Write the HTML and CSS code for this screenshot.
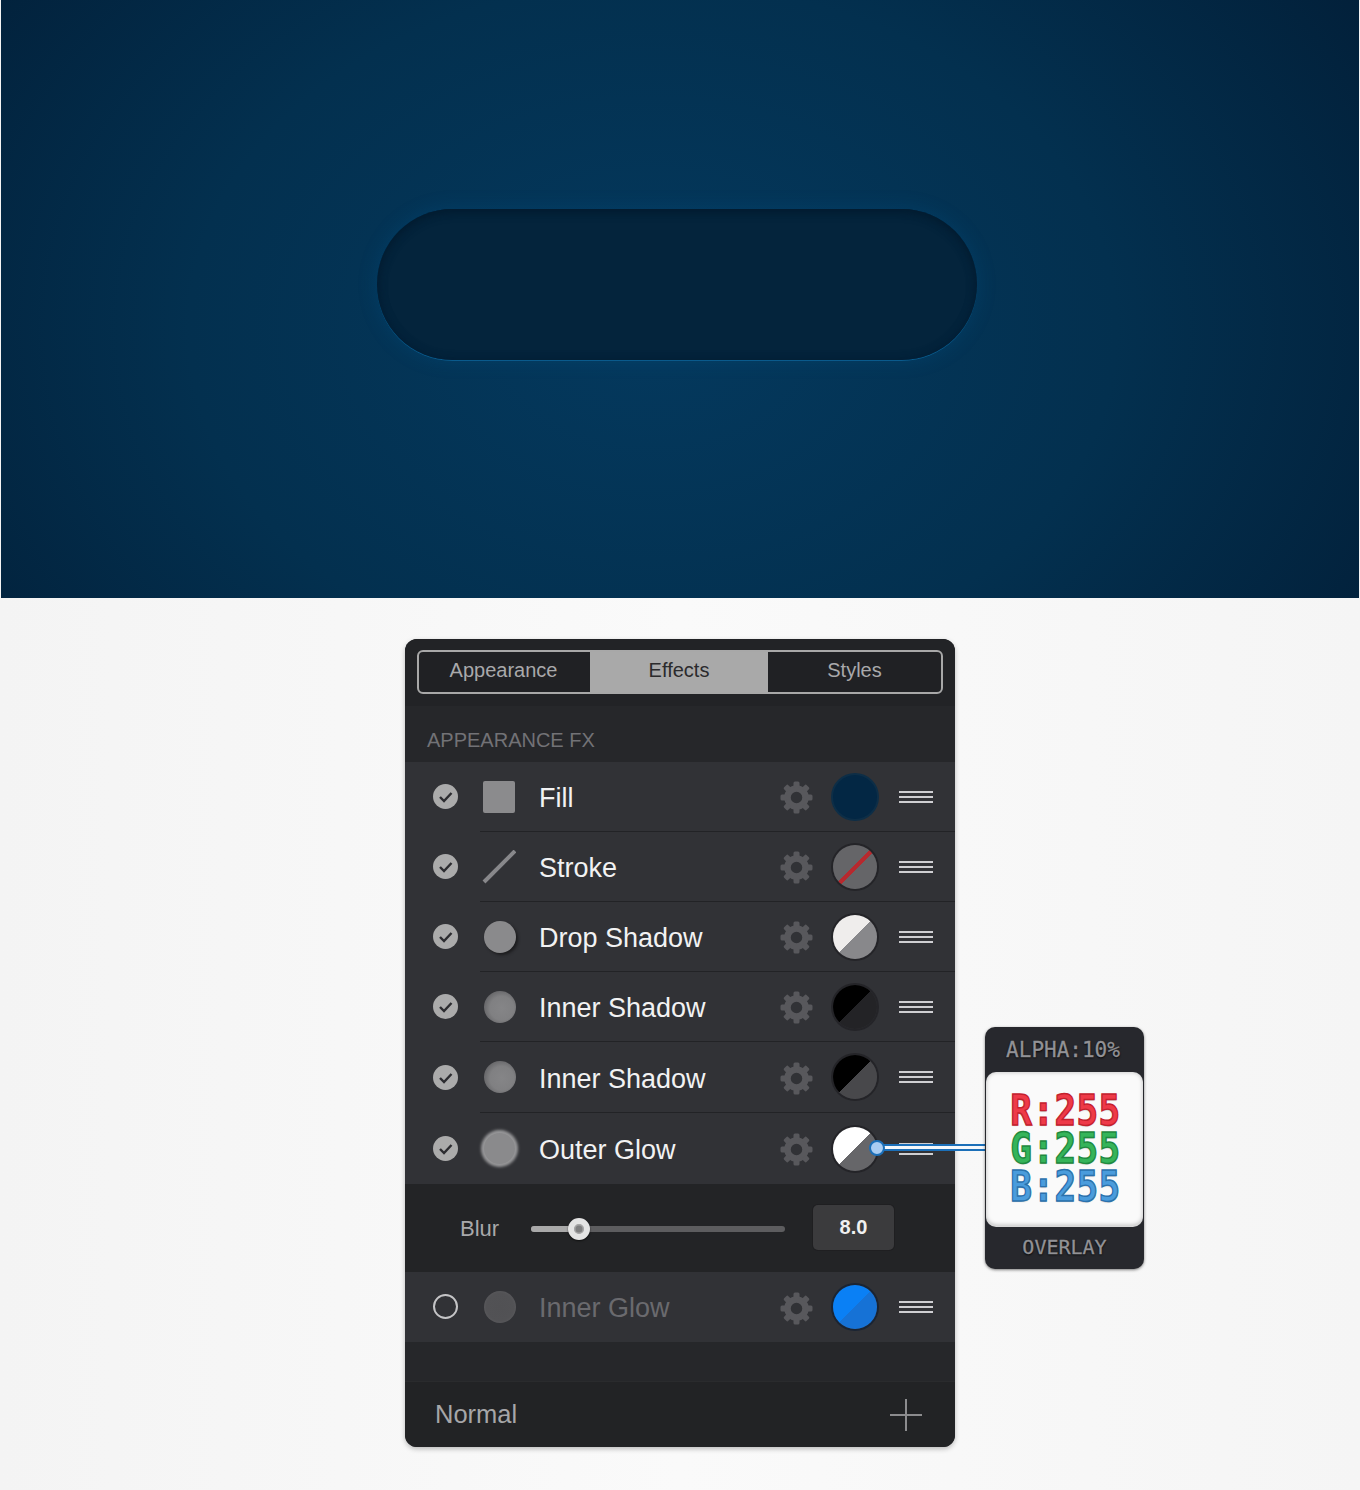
FILE: index.html
```html
<!DOCTYPE html>
<html lang="en">
<head>
  <meta charset="UTF-8" />
  <title>Appearance FX</title>
  <link rel="stylesheet" href="styles.css">
</head>
<body>
  <svg class="defs" width="0" height="0">
    <defs>
      <g id="gear">
        <circle cx="16.5" cy="16.5" r="9" fill="none" stroke="currentColor" stroke-width="6.5" />
        <rect x="13.5" y="0.5" width="6" height="6" rx="1.5" fill="currentColor" />
        <rect x="13.5" y="0.5" width="6" height="6" rx="1.5" fill="currentColor" transform="rotate(45 16.5 16.5)" />
        <rect x="13.5" y="0.5" width="6" height="6" rx="1.5" fill="currentColor" transform="rotate(90 16.5 16.5)" />
        <rect x="13.5" y="0.5" width="6" height="6" rx="1.5" fill="currentColor" transform="rotate(135 16.5 16.5)" />
        <rect x="13.5" y="0.5" width="6" height="6" rx="1.5" fill="currentColor" transform="rotate(180 16.5 16.5)" />
        <rect x="13.5" y="0.5" width="6" height="6" rx="1.5" fill="currentColor" transform="rotate(225 16.5 16.5)" />
        <rect x="13.5" y="0.5" width="6" height="6" rx="1.5" fill="currentColor" transform="rotate(270 16.5 16.5)" />
        <rect x="13.5" y="0.5" width="6" height="6" rx="1.5" fill="currentColor" transform="rotate(315 16.5 16.5)" />
      </g>
      <path id="tick" d="M7 13l4 4 7.5-8" fill="none" stroke="#2c2c30" stroke-width="2.4" />
    </defs>
  </svg>

  <div class="hero">
    <div class="pill"></div>
  </div>

  <div class="stage">
    <div class="panel">
      <div class="tabs-bar">
        <div class="tabs">
          <div class="tab">Appearance</div>
          <div class="tab active">Effects</div>
          <div class="tab">Styles</div>
        </div>
      </div>

      <div class="section-head">APPEARANCE FX</div>

      <div class="row">
        <div class="check"><svg width="25" height="25" viewBox="0 0 25 25"><use href="#tick" /></svg></div>
        <div class="row-body">
          <div class="icon-slot"><span class="ic-square"></span></div>
          <div class="name">Fill</div>
          <svg class="gear" width="33" height="33" viewBox="0 0 33 33"><use href="#gear" /></svg>
          <div class="swatch sw-fill"></div>
          <div class="handle"><i></i><i></i><i></i></div>
        </div>
      </div>

      <div class="row">
        <div class="check"><svg width="25" height="25" viewBox="0 0 25 25"><use href="#tick" /></svg></div>
        <div class="row-body">
          <div class="icon-slot">
            <svg width="34" height="34" viewBox="0 0 34 34"><path d="M2 32L33 1" stroke="#88888b" stroke-width="4" /></svg>
          </div>
          <div class="name">Stroke</div>
          <svg class="gear" width="33" height="33" viewBox="0 0 33 33"><use href="#gear" /></svg>
          <div class="swatch sw-stroke"></div>
          <div class="handle"><i></i><i></i><i></i></div>
        </div>
      </div>

      <div class="row">
        <div class="check"><svg width="25" height="25" viewBox="0 0 25 25"><use href="#tick" /></svg></div>
        <div class="row-body">
          <div class="icon-slot"><span class="ic-dot ic-drop"></span></div>
          <div class="name">Drop Shadow</div>
          <svg class="gear" width="33" height="33" viewBox="0 0 33 33"><use href="#gear" /></svg>
          <div class="swatch sw-drop"></div>
          <div class="handle"><i></i><i></i><i></i></div>
        </div>
      </div>

      <div class="row">
        <div class="check"><svg width="25" height="25" viewBox="0 0 25 25"><use href="#tick" /></svg></div>
        <div class="row-body">
          <div class="icon-slot"><span class="ic-dot ic-inner"></span></div>
          <div class="name">Inner Shadow</div>
          <svg class="gear" width="33" height="33" viewBox="0 0 33 33"><use href="#gear" /></svg>
          <div class="swatch sw-inner1"></div>
          <div class="handle"><i></i><i></i><i></i></div>
        </div>
      </div>

      <div class="row tall">
        <div class="check"><svg width="25" height="25" viewBox="0 0 25 25"><use href="#tick" /></svg></div>
        <div class="row-body">
          <div class="icon-slot"><span class="ic-dot ic-inner"></span></div>
          <div class="name">Inner Shadow</div>
          <svg class="gear" width="33" height="33" viewBox="0 0 33 33"><use href="#gear" /></svg>
          <div class="swatch sw-inner2"></div>
          <div class="handle"><i></i><i></i><i></i></div>
        </div>
      </div>

      <div class="row tall">
        <div class="check"><svg width="25" height="25" viewBox="0 0 25 25"><use href="#tick" /></svg></div>
        <div class="row-body no-line">
          <div class="icon-slot"><span class="ic-dot ic-outer"></span></div>
          <div class="name">Outer Glow</div>
          <svg class="gear" width="33" height="33" viewBox="0 0 33 33"><use href="#gear" /></svg>
          <div class="swatch sw-outer"></div>
          <div class="handle"><i></i><i></i><i></i></div>
        </div>
      </div>

      <div class="blur-row">
        <div class="blur-label">Blur</div>
        <div class="slider">
          <div class="slider-fill"></div>
          <div class="thumb"></div>
        </div>
        <div class="value">8.0</div>
      </div>

      <div class="row row-off">
        <div class="check off"></div>
        <div class="row-body no-line">
          <div class="icon-slot"><span class="ic-dot ic-dim"></span></div>
          <div class="name">Inner Glow</div>
          <svg class="gear" width="33" height="33" viewBox="0 0 33 33"><use href="#gear" /></svg>
          <div class="swatch sw-glow"></div>
          <div class="handle"><i></i><i></i><i></i></div>
        </div>
      </div>

      <div class="spacer"></div>

      <div class="footer">
        <div class="mode">Normal</div>
        <div class="plus"></div>
      </div>
    </div>

    <div class="connector"><span class="connector-dot"></span></div>

    <div class="callout">
      <div class="callout-top">ALPHA:10%</div>
      <div class="callout-card">
        <div class="rgb r">R:255</div>
        <div class="rgb g">G:255</div>
        <div class="rgb b">B:255</div>
      </div>
      <div class="callout-bottom">OVERLAY</div>
    </div>
  </div>
</body>
</html>
```

FILE: styles.css
```css
html, body {
  margin: 0;
  padding: 0;
}

body {
  height: 1490px;
  overflow: hidden;
  background: linear-gradient(90deg, #f4f4f4 0, #fafafa 50%, #f5f5f5 100%);
  font-family: "Liberation Sans", Arial, sans-serif;
}

.defs {
  position: absolute;
}

.hero {
  height: 598px;
  margin: 0 1px;
  display: flex;
  justify-content: center;
  padding-top: 209px;
  box-sizing: border-box;
  background: radial-gradient(ellipse 62% 105% at 48% 55%, #04395e 0, #03304f 55%, #02203a 100%);
}

.pill {
  width: 600px;
  height: 151px;
  margin-left: -6px;
  border-radius: 76px;
  background: #04243c;
  box-shadow: inset 0 3px 10px #031b2e, inset 0 0 8px #03203a, 0 1px 0 #0a5a8c, 0 0 20px rgba(0, 110, 180, 0.18);
}

.stage {
  position: relative;
  width: 550px;
  margin: 41px auto 0;
}

.panel {
  width: 550px;
  border-radius: 12px;
  overflow: hidden;
  background: #26272a;
  box-shadow: 0 2px 5px rgba(0, 0, 0, 0.25);
}

.tabs-bar {
  height: 67px;
  padding: 11px 12px 0;
  box-sizing: border-box;
  background: #222326;
}

.tabs {
  display: flex;
  height: 44px;
  box-sizing: border-box;
  border: 2px solid #a8a8a8;
  border-radius: 6px;
  overflow: hidden;
  background: #202124;
}

.tab {
  flex: 1;
  display: flex;
  align-items: center;
  justify-content: center;
  padding-bottom: 3px;
  box-sizing: border-box;
  font-size: 20px;
  color: #a9a9ab;
}

.tab:first-child {
  flex: 0 0 171px;
  padding-right: 2px;
}

.tab.active {
  flex: 0 0 178px;
  background: #a9a9a9;
  color: #2b2b2d;
}

.section-head {
  height: 56px;
  padding: 23px 0 0 22px;
  box-sizing: border-box;
  font-size: 20px;
  color: #727276;
}

.row {
  display: flex;
  align-items: center;
  height: 70px;
  background: #313236;
}

.row.tall {
  height: 71px;
}

.check {
  flex: none;
  width: 25px;
  height: 25px;
  margin: -1px 22px 0 28px;
  border-radius: 50%;
  background: #ababab;
}

.check svg {
  display: block;
}

.check.off {
  width: 21px;
  height: 21px;
  background: none;
  border: 2px solid #c4c4c6;
}

.row-body {
  flex: 1;
  align-self: stretch;
  display: flex;
  align-items: center;
  box-sizing: border-box;
  border-bottom: 1px solid #222326;
  padding-right: 22px;
}

.row-body.no-line {
  border-bottom: none;
}

.icon-slot {
  flex: none;
  width: 36px;
  height: 34px;
  margin-right: 23px;
  padding-left: 3px;
  box-sizing: border-box;
  display: flex;
  align-items: center;
}

.icon-slot svg {
  margin-left: -1px;
}

.ic-square {
  width: 32px;
  height: 32px;
  border-radius: 2px;
  background: #8b8b8d;
}

.ic-dot {
  width: 32px;
  height: 32px;
  margin-left: 1px;
  border-radius: 50%;
  background: #8a8a8c;
}

.ic-drop {
  box-shadow: 2px 2px 3px #1c1c1e;
}

.ic-inner {
  background: radial-gradient(circle at 56% 54%, #858587 0, #808082 48%, #626265 78%, #3f3f42 100%);
}

.ic-outer {
  width: 31px;
  height: 31px;
  box-shadow: 0 0 3px 3px #99999b;
}

.ic-dim {
  background: radial-gradient(circle, #515154 0, #525255 60%, #636366 100%);
}

.name {
  flex: 1;
  margin-top: 4px;
  font-size: 27px;
  color: #f2f2f3;
}

.row-off .name {
  margin-top: 2px;
  color: #6a6a6e;
}

.gear {
  flex: none;
  color: #58585c;
  margin: 2px 20px 0 0;
}

.swatch {
  flex: none;
  width: 44px;
  height: 44px;
  margin-right: 22px;
  border-radius: 50%;
  box-shadow: 0 0 0 2px #242428;
}

.sw-fill { background: #032744; box-shadow: 0 0 0 2px #0d2e47; }
.sw-stroke { background: linear-gradient(135deg, #656568 47.5%, #b62a2f 47.5%, #b62a2f 53.5%, #656568 53.5%); }
.sw-drop { background: linear-gradient(135deg, #efedec 50%, #88888b 50%); }
.sw-inner1 { background: linear-gradient(135deg, #000 50%, #232326 50%); }
.sw-inner2 { background: linear-gradient(135deg, #000 50%, #48484b 50%); }
.sw-outer { background: linear-gradient(135deg, #fff 50%, #666669 50%); }
.sw-glow { background: linear-gradient(135deg, #0a80f5 50%, #1672d6 50%); box-shadow: 0 0 0 2px #1a2433; }

.handle {
  flex: none;
  width: 34px;
  display: flex;
  flex-direction: column;
  gap: 3px;
}

.handle i {
  height: 2px;
  background: #cfcfd2;
}

.blur-row {
  display: flex;
  align-items: center;
  height: 88px;
  box-sizing: border-box;
  padding-left: 55px;
  background: #232426;
}

.blur-label {
  width: 71px;
  margin-top: 2px;
  font-size: 22px;
  color: #a9a9ab;
}

.slider {
  position: relative;
  width: 254px;
  height: 6px;
  margin-top: 2px;
  border-radius: 3px;
  background: #5d5d5f;
}

.slider-fill {
  width: 48px;
  height: 6px;
  border-radius: 3px;
  background: #a9a9a9;
}

.thumb {
  position: absolute;
  left: 37px;
  top: -8px;
  width: 10px;
  height: 10px;
  border: 6px solid #e4e4e4;
  border-radius: 50%;
  background: #7f7f80;
  box-shadow: 0 1px 2px rgba(0, 0, 0, 0.6), inset 0 0 0 1.5px #a5a5a5;
}

.value {
  width: 81px;
  height: 45px;
  margin: -2px 0 0 28px;
  border-radius: 5px;
  background: #3b3b3d;
  box-shadow: 0 0 0 1px #1f1f21;
  display: flex;
  align-items: center;
  justify-content: center;
  font-size: 20px;
  font-weight: bold;
  color: #f0f0f0;
}

.spacer {
  height: 39px;
  background: #26272a;
}

.footer {
  display: flex;
  align-items: center;
  justify-content: space-between;
  height: 66px;
  padding: 0 33px 0 30px;
  box-sizing: border-box;
  background: #222325;
  border-top: 1px solid #2a2b2d;
}

.mode {
  font-size: 25.5px;
  color: #a6a6a8;
}

.plus {
  position: relative;
  width: 32px;
  height: 32px;
}

.plus::before, .plus::after {
  content: "";
  position: absolute;
  background: #8c8c8e;
}

.plus::before {
  left: 0;
  right: 0;
  top: 15px;
  height: 2px;
}

.plus::after {
  top: 0;
  bottom: 0;
  left: 15px;
  width: 2px;
}

.connector {
  position: absolute;
  left: 472px;
  top: 505px;
  width: 108px;
  height: 3px;
  border-top: 2px solid #1b6fb8;
  border-bottom: 2px solid #1b6fb8;
  background: #f4f8fc;
}

.connector-dot {
  position: absolute;
  left: -8px;
  top: -6.5px;
  width: 12px;
  height: 12px;
  border: 2px solid #1b6fb8;
  border-radius: 50%;
  background: #a9cdf2;
}

.callout {
  position: absolute;
  left: 580px;
  top: 388px;
  width: 159px;
  height: 242px;
  border-radius: 10px;
  overflow: hidden;
  display: flex;
  flex-direction: column;
  background: #27282d;
  box-shadow: 0 1px 3px rgba(0, 0, 0, 0.5);
}

.callout-top, .callout-bottom {
  display: flex;
  align-items: center;
  justify-content: center;
  font-family: "DejaVu Sans Mono", monospace;
  color: #929296;
  -webkit-text-stroke: 0.3px #929296;
  text-shadow: 0 1px 2px #000;
}

.callout-top {
  height: 45px;
  padding-right: 3px;
  box-sizing: border-box;
  font-size: 21px;
}

.callout-bottom {
  height: 44px;
  font-size: 20px;
}

.callout-card {
  flex: 1;
  margin: 0 1px;
  padding: 23px 0 0 2px;
  border-radius: 10px;
  background: #fafafa;
  box-shadow: inset 0 0 4px rgba(0, 0, 0, 0.25), 0 2px 0 #d8d8d8;
  text-align: center;
}

.rgb {
  height: 32px;
  line-height: 32px;
  margin-bottom: 6.2px;
  font-family: "DejaVu Sans Mono", monospace;
  font-weight: bold;
  font-size: 36px;
  letter-spacing: 0.4px;
  transform: scaleY(1.18);
}

.rgb.r { color: #ee3a48; -webkit-text-stroke: 1.2px #c4212d; text-shadow: 0 1px 1px rgba(0, 0, 0, 0.25); }
.rgb.g { color: #35b45a; -webkit-text-stroke: 1.2px #1f8a3f; text-shadow: 0 1px 1px rgba(0, 0, 0, 0.25); }
.rgb.b { color: #4a9cdc; -webkit-text-stroke: 1.2px #2a71ad; text-shadow: 0 1px 1px rgba(0, 0, 0, 0.25); }
```
